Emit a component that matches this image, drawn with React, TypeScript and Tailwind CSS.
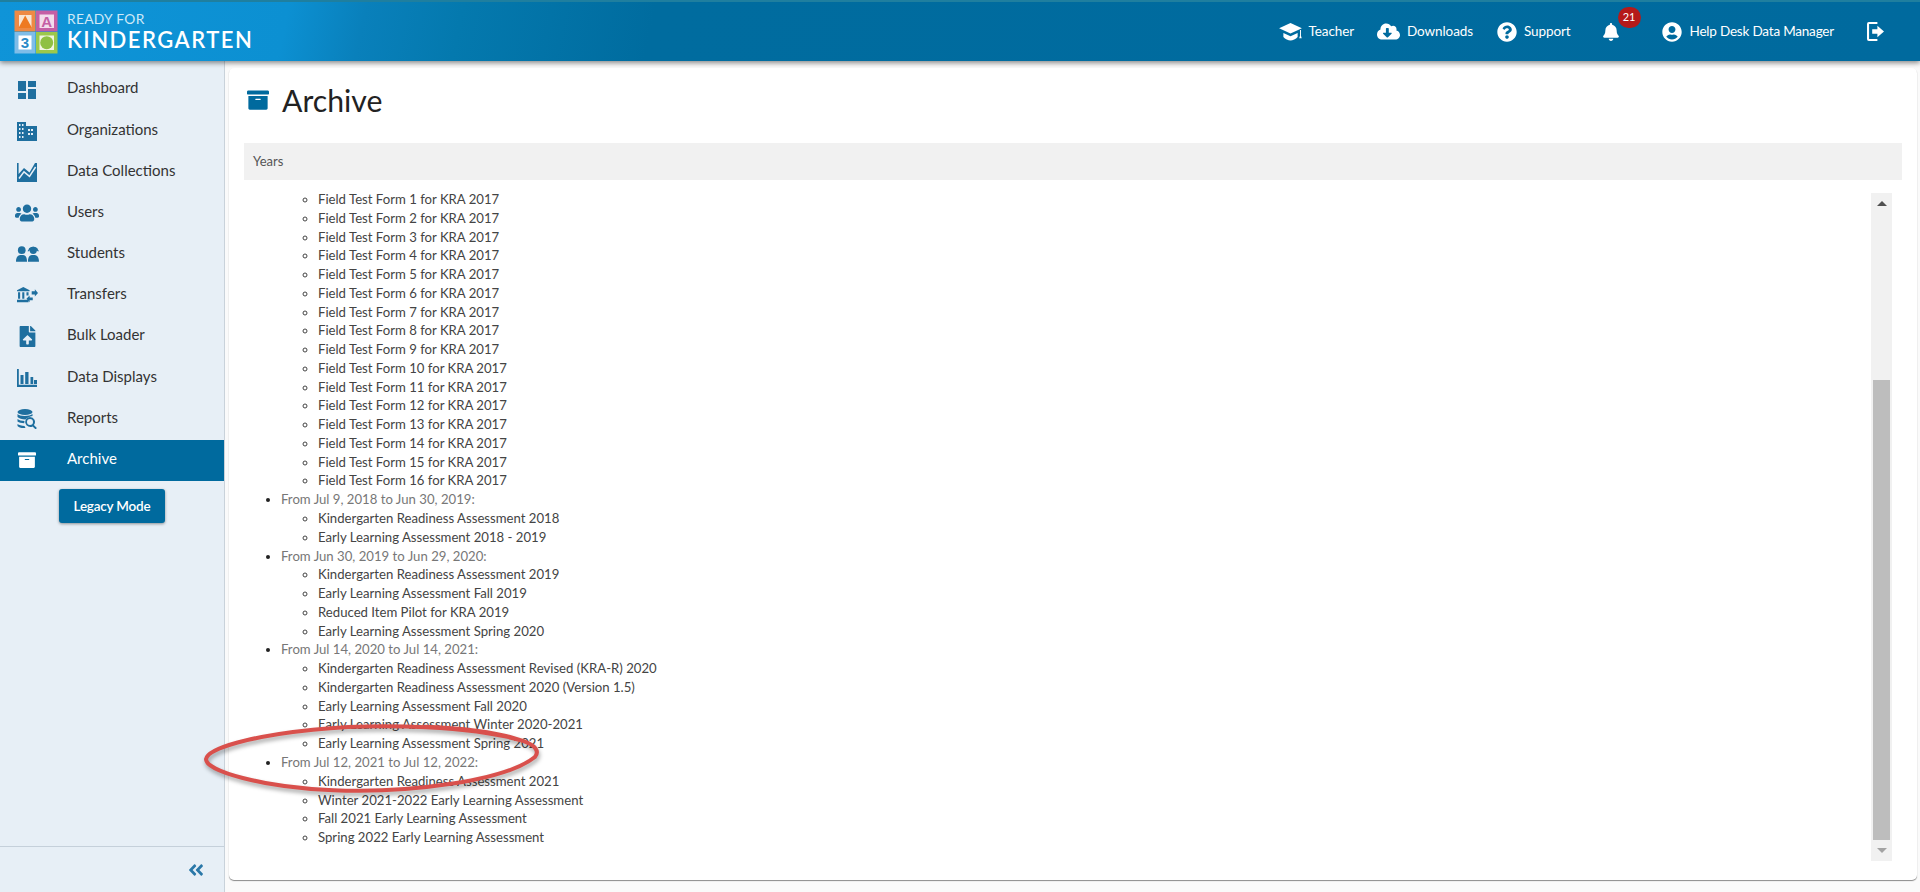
import React from "react";
import {
  FaUsers, FaFileUpload, FaArchive, FaCloudDownloadAlt,
  FaQuestionCircle, FaBell, FaUserCircle, FaAngleDoubleLeft,
} from "react-icons/fa";
import { MdDashboard } from "react-icons/md";

const Cap = () => (
  <svg viewBox="0 0 24 20" width="23" height="19" fill="currentColor">
    <path d="M12 1L24 6.500 12 12 0 6.500z" />
    <path d="M4.500 11.500L12 15l7.500-3.500v4.300C17.500 18 14.500 19.500 12 19.500S6.500 18 4.500 15.800z" />
    <path d="M22 8.500h1v6l.8 2.500h-2.600l.8-2.500z" />
  </svg>
);
const Org = () => (
  <svg viewBox="0 0 20 20" width="20" height="20" fill="currentColor">
    <path fillRule="evenodd" d="M0 1h9v4h11v15H0zM2 3v2h1.500V3zm3 0v2h1.500V3zM2 7v2h1.500V7zm3 0v2h1.500V7zm-3 4v2h1.500v-2zm3 0v2h1.500v-2zm-3 4v2h1.500v-2zm3 0v2h1.500v-2zm6-7v2h2V8zm3 0v2h2V8zm-3 4v2h2v-2zm3 0v2h2v-2z" />
  </svg>
);
const Collections = () => (
  <svg viewBox="0 0 20 20" width="20" height="20" fill="currentColor">
    <path d="M0 1h1.600v11L7 6l5.500 4.500L18 1h2v19H0z" />
    <path d="M2 16.500L7 9.800l5.500 4.500L18.600 5" fill="none" stroke="#e7eff6" strokeWidth="1.500" />
  </svg>
);
const Students = () => (
  <svg viewBox="0 0 24 18" width="23" height="18" fill="currentColor">
    <circle cx="6" cy="5" r="4" />
    <path d="M0 17c0-5 2-7 6-7s5.500 2 5.500 7zM12.500 17c0-5 1.500-7 5.500-7s6 2 6 7z" />
    <circle cx="18" cy="5.200" r="3.800" />
    <path d="M13 4.500C14 .5 22 .5 23 4.500l1 1.500-1.500.2C21 2.500 15 2.500 13.500 6.200L12 6z" />
  </svg>
);
const Transfers = () => (
  <svg viewBox="0 0 20 16" width="21" height="17" fill="currentColor">
    <path d="M6 0l6 3v1H0V3zM1 5h2v6H1zM5 5h2v6H5zM9 5h2v3H9zM0 12h11v2.500H0z" />
    <path d="M14 4h3V2l3 3.500L17 9V7h-3zM9 11l3-3v2h3v2.500h-3v2z" />
  </svg>
);
const Bars = () => (
  <svg viewBox="0 0 20 18" width="20" height="18" fill="currentColor">
    <path d="M0 0h1.800v15.800H20V18H0zM3.500 6h3v9h-3zM8.200 3h3.300v12H8.200zM13.500 8h2.700v7h-2.700zM17 11h3v4h-3z" />
  </svg>
);
const Reports = () => (
  <svg viewBox="0 0 20 20" width="20" height="20" fill="currentColor">
    <ellipse cx="8" cy="3" rx="7.500" ry="3" />
    <path d="M.5 5C2 7.500 13 7.500 15.500 5v2c-3 .5-5.500 1.500-7 3.500C5 10.500 2 9.500.5 8zM.5 10c1.500 1.300 4 2 7 2l-.3 2.300C4.500 14.200 2 13.500.5 12.500zM.5 15c1.500 1.200 4 1.800 7 2l1 2c-4 .3-7-.5-8-2z" />
    <path fillRule="evenodd" d="M13 8a5 5 0 013.900 8.100l3 3-1.300 1.300-3-3A5 5 0 1113 8zm0 2a3 3 0 100 6 3 3 0 000-6z" />
  </svg>
);
const Logout = () => (
  <svg viewBox="0 0 18 20" width="17" height="19" fill="currentColor">
    <path d="M2 0h9v2H2.200v16H11v2H2a2 2 0 01-2-2V2a2 2 0 012-2z" />
    <path d="M5.500 7.500H11V4l7 6-7 6v-3.500H5.500z" />
  </svg>
);

const nav: [string, React.ReactNode][] = [
  ["Dashboard", <MdDashboard size={24} />],
  ["Organizations", <Org />],
  ["Data Collections", <Collections />],
  ["Users", <FaUsers size={24} />],
  ["Students", <Students />],
  ["Transfers", <Transfers />],
  ["Bulk Loader", <FaFileUpload size={21} />],
  ["Data Displays", <Bars />],
  ["Reports", <Reports />],
  ["Archive", <FaArchive size={18} />],
];

const groups: { title?: string; items: string[] }[] = [
  {
    items: Array.from({ length: 16 }, (_, i) => `Field Test Form ${i + 1} for KRA 2017`),
  },
  {
    title: "From Jul 9, 2018 to Jun 30, 2019:",
    items: ["Kindergarten Readiness Assessment 2018", "Early Learning Assessment 2018 - 2019"],
  },
  {
    title: "From Jun 30, 2019 to Jun 29, 2020:",
    items: [
      "Kindergarten Readiness Assessment 2019",
      "Early Learning Assessment Fall 2019",
      "Reduced Item Pilot for KRA 2019",
      "Early Learning Assessment Spring 2020",
    ],
  },
  {
    title: "From Jul 14, 2020 to Jul 14, 2021:",
    items: [
      "Kindergarten Readiness Assessment Revised (KRA-R) 2020",
      "Kindergarten Readiness Assessment 2020 (Version 1.5)",
      "Early Learning Assessment Fall 2020",
      "Early Learning Assessment Winter 2020-2021",
      "Early Learning Assessment Spring 2021",
    ],
  },
  {
    title: "From Jul 12, 2021 to Jul 12, 2022:",
    items: [
      "Kindergarten Readiness Assessment 2021",
      "Winter 2021-2022 Early Learning Assessment",
      "Fall 2021 Early Learning Assessment",
      "Spring 2022 Early Learning Assessment",
    ],
  },
];

const Logo = () => (
  <svg viewBox="0 0 44 44" width="44" height="44">
    <rect x="0.500" y="0.500" width="21" height="21" fill="#ee8a44" />
    <rect x="5" y="5" width="12.500" height="13" fill="#f8e6d4" />
    <path d="M11.200 5.500L18 18H4.500z" fill="#ee7a22" />
    <rect x="22" y="0.500" width="21.500" height="21" fill="#c55fa5" />
    <rect x="25.500" y="4.500" width="14.500" height="13.500" fill="#f3dcec" />
    <text x="32.700" y="16.500" textAnchor="middle" fontSize="15" fontWeight="700" fill="#c55fa5" fontFamily="Liberation Sans, sans-serif">A</text>
    <rect x="0.500" y="22" width="21" height="21.500" fill="#7fbde8" />
    <rect x="4.500" y="25.500" width="13" height="14" fill="#ffffff" />
    <text x="11" y="38" textAnchor="middle" fontSize="15" fontWeight="700" fill="#2a8ac8" fontFamily="Liberation Sans, sans-serif">3</text>
    <rect x="22" y="22" width="21.500" height="21.500" fill="#9cc84c" />
    <rect x="25.500" y="25.500" width="14.500" height="14.500" fill="#f2f6e3" />
    <circle cx="32.700" cy="32.700" r="6.500" fill="#8fc043" />
  </svg>
);

const TopLink = ({ icon, label, gap = "gap-[7px]", track = "tracking-[-0.1px]" }: { icon: React.ReactNode; label: string; gap?: string; track?: string }) => (
  <div className={`flex items-center ${gap} ${track} text-[13.500px] text-white`}>
    {icon}
    <span>{label}</span>
  </div>
);

export default function App() {
  return (
    <div
      className="relative flex h-[892px] w-[1920px] flex-col overflow-hidden bg-[#fafafa] text-[#333]"
      style={{ fontFamily: "Lato, 'Liberation Sans', sans-serif" }}
    >
      <header className="z-10 flex h-[61px] shrink-0 items-center justify-between border-t-2 border-[#1f7f9f] bg-[linear-gradient(102deg,#0f94d8_0%,#0c90d2_15%,#0980bb_19%,#0479ae_24%,#006c9f_34%,#006a9e_100%)] pr-[36px] pl-[14px] shadow-[0_2px_5px_rgba(0,0,0,0.45)]">
        <div className="flex items-center gap-[9px]">
          <Logo />
          <div className="flex flex-col text-white">
            <span className="text-[13.800px] leading-[17px] tracking-[0.3px] text-[#cfe9f7]">READY FOR</span>
            <span className="text-[22px] leading-[26px] font-semibold tracking-[1.500px]">KINDERGARTEN</span>
          </div>
        </div>
        <div className="flex items-center">
          <div className="mr-[23px]"><TopLink icon={<Cap />} label="Teacher" gap="gap-[7px]" /></div>
          <div className="mr-[24px]"><TopLink icon={<FaCloudDownloadAlt size={23} />} label="Downloads" /></div>
          <div className="mr-[31px]"><TopLink icon={<FaQuestionCircle size={20} />} label="Support" /></div>
          <div className="relative mr-[42px] text-white">
            <FaBell size={18} />
            <span className="absolute -top-[16px] left-[16px] flex h-[21px] w-[23px] items-center justify-center rounded-full bg-[#b51a1a] text-[11px] text-white">21</span>
          </div>
          <div className="mr-[33px]"><TopLink icon={<FaUserCircle size={20} />} label="Help Desk Data Manager" gap="gap-[8px]" track="tracking-[-0.2px]" /></div>
          <div className="text-white"><Logout /></div>
        </div>
      </header>

      <div className="flex min-h-0 flex-1">
        <aside className="flex w-[225px] shrink-0 flex-col border-r border-[#c9d2da] bg-[#e7eff6]">
          <nav className="flex-1 pt-[8px]">
            {nav.map(([label, icon]) => {
              const active = label === "Archive";
              return (
                <div
                  key={label}
                  className={`flex h-[41.200px] items-center pb-[4px] text-[15px] ${active ? "bg-[#006a9e] text-white" : "text-[#333]"}`}
                >
                  <span className={`flex w-[67px] shrink-0 items-center justify-center pr-[14px] pl-[1px] pt-[4px] ${active ? "text-white" : "text-[#1f6f9f]"}`}>
                    {icon}
                  </span>
                  <span>{label}</span>
                </div>
              );
            })}
            <button className="mt-[8px] ml-[59px] h-[34px] w-[106px] rounded-[3px] bg-[#006a9e] text-[13.500px] font-semibold tracking-[-0.2px] text-white shadow-[0_1px_3px_rgba(0,0,0,0.4)]">
              Legacy Mode
            </button>
          </nav>
          <div className="flex h-[46px] items-center justify-end border-t border-[#c5d0da] pr-[19px] text-[#2a78a8]">
            <FaAngleDoubleLeft size={18} />
          </div>
        </aside>

        <main className="min-w-0 flex-1 pt-[7px] pr-[3px] pb-[12px] pl-[4px]">
          <section className="relative flex h-full flex-col rounded-[5px] bg-white px-[15px] shadow-[0_1px_1px_rgba(0,0,0,0.45)]">
            <div className="flex h-[75px] shrink-0 items-center gap-[13px] pb-[11px] pl-[3px]">
              <FaArchive size={22} className="text-[#006a9e]" />
              <h1 className="text-[30.200px] leading-none font-normal text-[#222]">Archive</h1>
            </div>
            <div className="flex h-[37px] shrink-0 items-center bg-[#f1f1f1] pl-[9px] text-[13px] text-[#555]">Years</div>
            <div className="mt-[10px] flex min-h-0 flex-1 pr-[10px] pb-[19px]">
              <div className="min-w-0 flex-1 text-[13.170px] leading-[18.770px]">
                <ul className="list-disc pl-[37px] marker:text-[#222]">
                  {groups.map((g, i) => (
                    <li key={i} className={g.title ? "text-[#777]" : "list-none"}>
                      {g.title}
                      <ul className="list-[circle] pl-[37px] text-[#444] marker:text-[#444]">
                        {g.items.map((t) => (
                          <li key={t}>{t}</li>
                        ))}
                      </ul>
                    </li>
                  ))}
                </ul>
              </div>
              <div className="mt-[3px] flex w-[21px] shrink-0 flex-col bg-[#f1f1f1]">
                <div className="flex h-[18px] items-center justify-center pt-[3px]">
                  <span className="h-0 w-0 border-x-[5px] border-b-[5px] border-x-transparent border-b-[#505050]" />
                </div>
                <div className="h-[169px]" />
                <div className="mx-[2px] flex-1 bg-[#bdbdbd]" />
                <div className="flex h-[21px] items-center justify-center">
                  <span className="h-0 w-0 border-x-[5px] border-t-[5px] border-x-transparent border-t-[#a3a3a3]" />
                </div>
              </div>
            </div>
            <svg
              className="pointer-events-none absolute top-[652px] -left-[27px] drop-shadow-[1px_3px_2px_rgba(0,0,0,0.35)]"
              width="343"
              height="78"
              viewBox="0 0 340 76"
              fill="none"
            >
              <path
                d="M318 20C270 6 180 2 110 9C50 15 6 27 4 38C3 50 60 66 130 69C205 72 300 60 330 36C335 30 330 24 318 20C290 10 250 7 220 6"
                stroke="#d9504c"
                strokeWidth="4"
                strokeLinecap="round"
              />
            </svg>
          </section>
        </main>
      </div>
    </div>
  );
}
